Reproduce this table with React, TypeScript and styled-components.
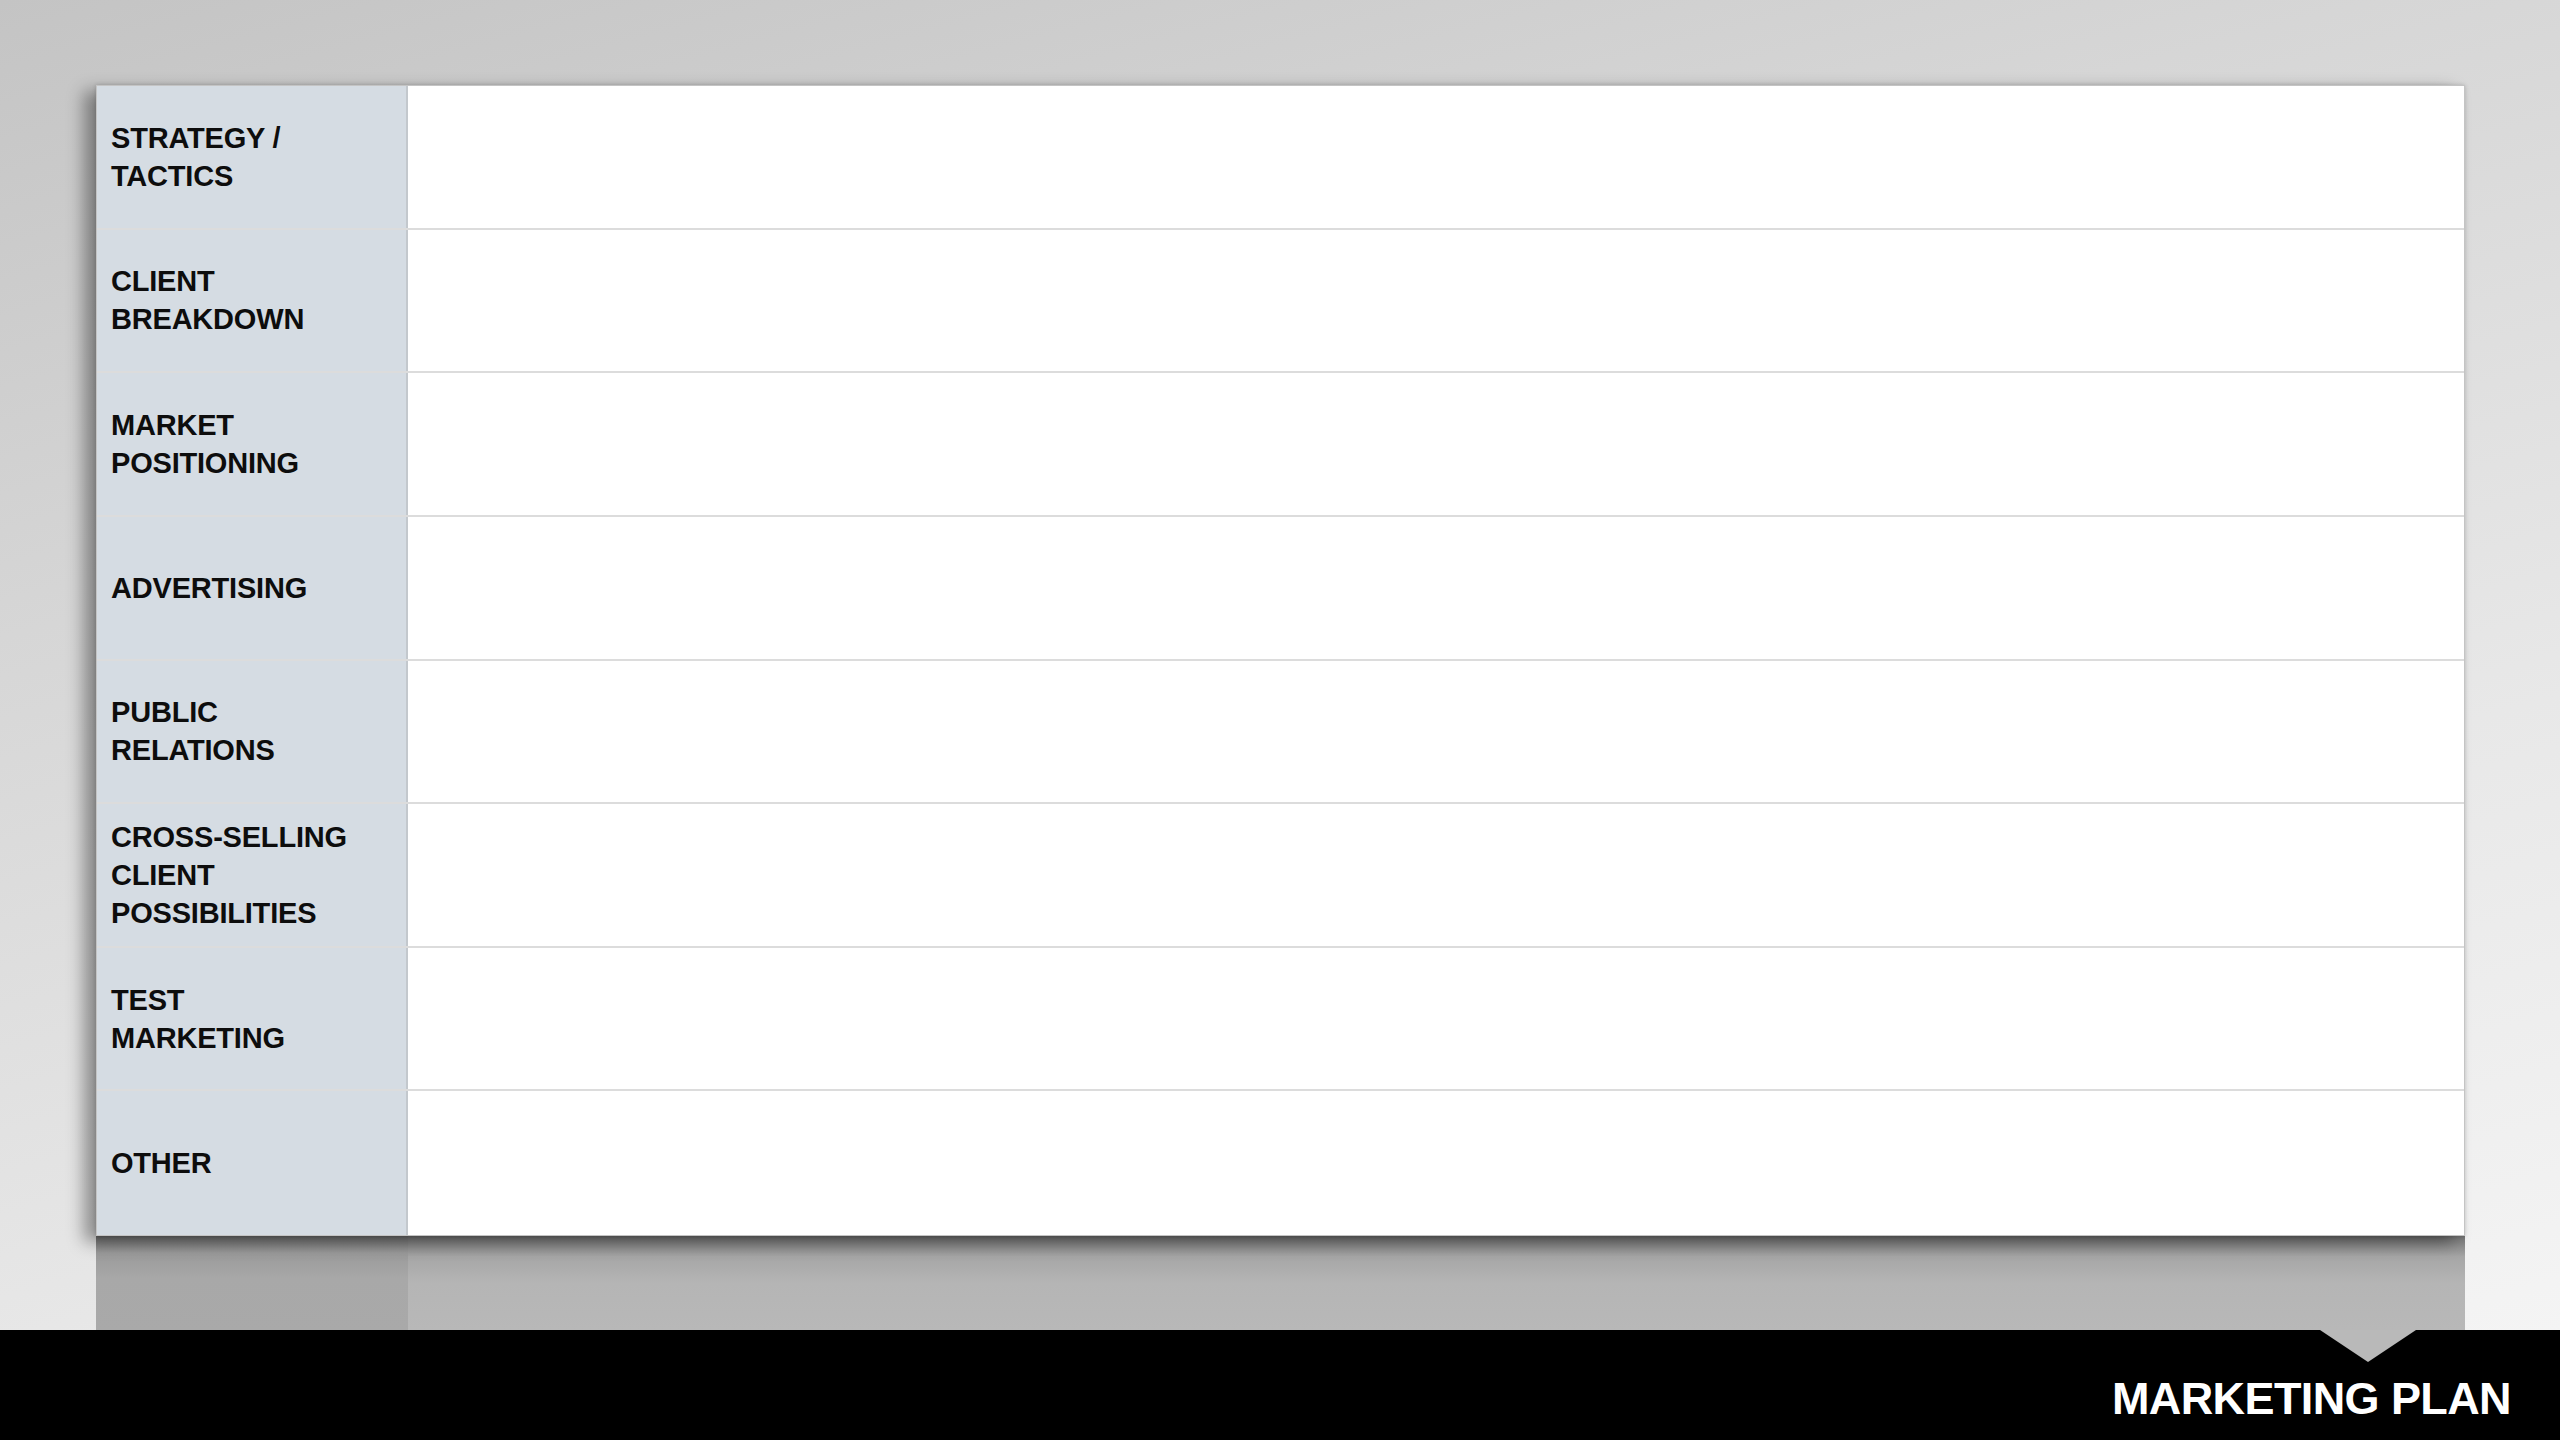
import React from "react";
import styled, { createGlobalStyle } from "styled-components";

const GlobalStyle = createGlobalStyle`
  html, body {
    margin: 0;
    padding: 0;
  }
  body {
    font-family: "Liberation Sans", Arial, sans-serif;
  }
`;

const rows: string[][] = [
  ["STRATEGY /", "TACTICS"],
  ["CLIENT", "BREAKDOWN"],
  ["MARKET", "POSITIONING"],
  ["ADVERTISING"],
  ["PUBLIC", "RELATIONS"],
  ["CROSS-SELLING", "CLIENT", "POSSIBILITIES"],
  ["TEST", "MARKETING"],
  ["OTHER"],
];

const App: React.FC = () => {
  return (
    <>
      <GlobalStyle />
      <Page>
        <Stage>
          <Table>
            {rows.map((lines, i) => (
              <Row key={i} last={i === rows.length - 1}>
                <Label>
                  {lines.map((l, j) => (
                    <span key={j}>{l}</span>
                  ))}
                </Label>
                <Cell />
              </Row>
            ))}
          </Table>
          <Reflection>
            <LabelShade />
            <CellShade />
          </Reflection>
        </Stage>
        <Footer>
          <Notch />
          <Title>MARKETING PLAN</Title>
        </Footer>
      </Page>
    </>
  );
};

const Page = styled.div`
  width: 2560px;
  height: 1440px;
  display: flex;
  flex-direction: column;
  overflow: hidden;
  background: linear-gradient(
    165deg,
    #c4c4c4 0%,
    #d6d6d6 30%,
    #e8e8e8 65%,
    #f6f6f6 100%
  );
`;

const Stage = styled.div`
  flex: 1;
  display: flex;
  flex-direction: column;
  padding: 85px 95px 0 96px;
`;

const Table = styled.div`
  height: 1151px;
  display: grid;
  grid-template-rows: repeat(8, 1fr);
  background: #ffffff;
  border: 1px solid #c4c4c4;
  box-sizing: border-box;
  box-shadow: -12px 6px 16px rgba(0, 0, 0, 0.38), 0 0 4px rgba(0, 0, 0, 0.18);
  position: relative;
  z-index: 1;
`;

const Row = styled.div<{ last?: boolean }>`
  display: flex;
  border-bottom: ${(p) => (p.last ? "none" : "2px solid #dcdcdc")};
`;

const Label = styled.div`
  width: 311px;
  flex-shrink: 0;
  display: flex;
  flex-direction: column;
  justify-content: center;
  padding-left: 14px;
  box-sizing: border-box;
  background: #d5dce3;
  border-right: 2px solid #c3c8cd;
  color: #0d0d0d;
  font-weight: 700;
  font-size: 29px;
  line-height: 38px;
  letter-spacing: -0.2px;
`;

const Cell = styled.div`
  flex: 1;
  background: #ffffff;
`;

const Reflection = styled.div`
  height: 94px;
  display: flex;
`;

const LabelShade = styled.div`
  width: 312px;
  background: linear-gradient(180deg, #707070 0%, #9a9a9a 18%, #a8a8a8 45%, #a9a9a9 100%);
`;

const CellShade = styled.div`
  flex: 1;
  background: linear-gradient(180deg, #747474 0%, #a6a6a6 22%, #b5b5b5 50%, #b8b8b8 100%);
`;

const Footer = styled.div`
  height: 110px;
  background: #000000;
  position: relative;
  display: flex;
  justify-content: flex-end;
  align-items: flex-start;
  padding-right: 49px;
`;

const Notch = styled.div`
  position: absolute;
  top: 0;
  right: 144px;
  width: 0;
  height: 0;
  border-left: 48px solid transparent;
  border-right: 48px solid transparent;
  border-top: 32px solid #b9b9b9;
`;

const Title = styled.div`
  margin-top: 44px;
  color: #ffffff;
  font-weight: 700;
  font-size: 45px;
  line-height: 50px;
  letter-spacing: -0.6px;
`;

export default App;
